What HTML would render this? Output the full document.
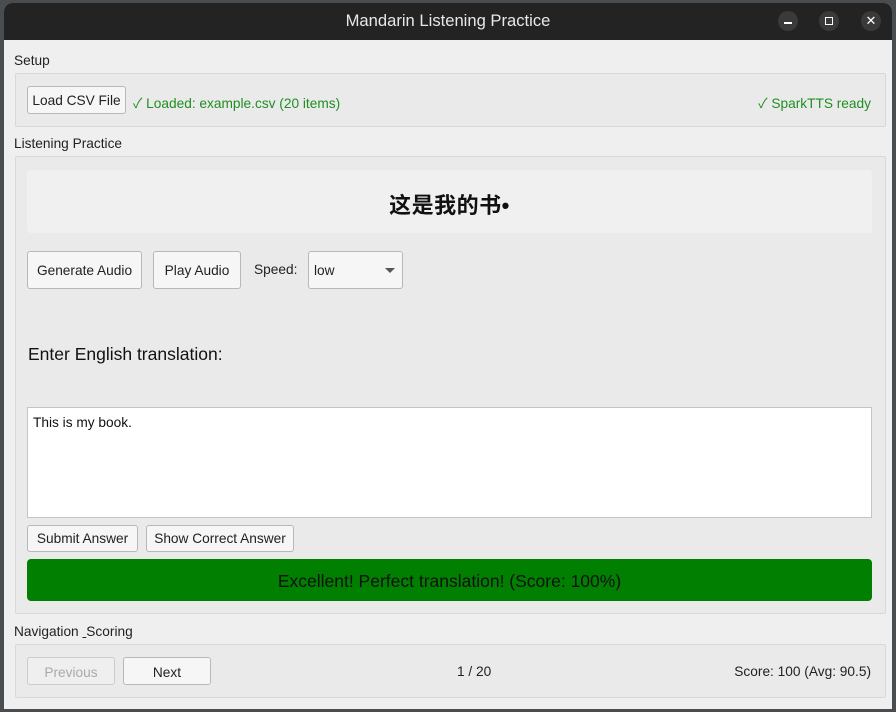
<!DOCTYPE html>
<html><head><meta charset="utf-8"><style>
*{box-sizing:border-box;margin:0;padding:0}
body{width:896px;height:712px;background:#4a4d50;font-family:"Liberation Sans","Noto Sans CJK SC",sans-serif;font-size:13.7px;color:#222;position:relative;overflow:hidden}
.abs{position:absolute}
.win{left:4px;top:3px;width:888px;height:706px;background:#efefef;border-radius:8px 8px 0 0;overflow:hidden}
.title{left:0;top:0;width:888px;height:37px;background:#232323;color:#e8e8e8;font-size:16.6px;text-align:center;line-height:36px}
.cb{width:20px;height:20px;border-radius:50%;background:#3a3a3a;top:8px}
.grp{border:1px solid #d8d8d8;background:#eaeaea;border-radius:2px}
.btn{border:1px solid #b8b8b8;background:#f6f6f6;border-radius:3px;text-align:center;color:#222}
.lbl{color:#222}
</style></head><body>
<div class="abs win">
 <div class="abs title">Mandarin Listening Practice</div>
 <div class="abs cb" style="left:774px"><div class="abs" style="left:6px;top:11px;width:8px;height:1.5px;background:#fff"></div></div>
 <div class="abs cb" style="left:815px"><div class="abs" style="left:6px;top:6px;width:8px;height:8px;border:1.5px solid #fff"></div></div>
 <div class="abs cb" style="left:857px;color:#fff;font-size:13px;text-align:center;line-height:20px">✕</div>

 <div class="abs lbl" style="left:10px;top:50px">Setup</div>
 <div class="abs grp" style="left:11px;top:70px;width:871px;height:54px"></div>
 <div class="abs btn" style="left:23px;top:83px;width:99px;height:28px;line-height:27px">Load CSV File</div>
 <div class="abs" style="left:129px;top:89px;color:#1f8f1f">✓ Loaded: example.csv (20 items)</div>
 <div class="abs" style="right:21px;top:89px;color:#1f8f1f">✓ SparkTTS ready</div>

 <div class="abs lbl" style="left:10px;top:133px">Listening Practice</div>
 <div class="abs grp" style="left:11px;top:153px;width:871px;height:458px"></div>
 <div class="abs" style="left:23px;top:167px;width:845px;height:63px;background:#f0f0f0;border-radius:4px"></div>
 <div class="abs" style="left:23px;top:190px;width:845px;text-align:center;font-size:22px;letter-spacing:0.5px;line-height:26px;font-weight:bold;color:#111">这是我的书•</div>
 <div class="abs btn" style="left:23px;top:248px;width:115px;height:38px;line-height:37px">Generate Audio</div>
 <div class="abs btn" style="left:149px;top:248px;width:88px;height:38px;line-height:37px">Play Audio</div>
 <div class="abs lbl" style="left:250px;top:259px">Speed:</div>
 <div class="abs btn" style="left:304px;top:248px;width:95px;height:38px;line-height:37px;text-align:left;padding-left:5px">low<span class="abs" style="left:76px;top:16px;width:0;height:0;border-left:5px solid transparent;border-right:5px solid transparent;border-top:5px solid #555"></span></div>
 <div class="abs" style="left:24px;top:341px;font-size:17.5px;color:#111">Enter English translation:</div>
 <div class="abs" style="left:23px;top:404px;width:845px;height:111px;background:#fff;border:1px solid #c4c4c4;padding:7px 5px;color:#111">This is my book.</div>
 <div class="abs btn" style="left:23px;top:522px;width:111px;height:27px;line-height:26px">Submit Answer</div>
 <div class="abs btn" style="left:142px;top:522px;width:148px;height:27px;line-height:26px">Show Correct Answer</div>
 <div class="abs" style="left:23px;top:556px;width:845px;height:42px;background:#007f00;border-radius:4px;text-align:center;line-height:44px;font-size:17.5px;color:#111">Excellent! Perfect translation! (Score: 100%)</div>

 <div class="abs lbl" style="left:10px;top:621px">Navigation <u>&nbsp;</u>Scoring</div>
 <div class="abs grp" style="left:11px;top:641px;width:871px;height:54px"></div>
 <div class="abs btn" style="left:23px;top:654px;width:88px;height:28px;line-height:29px;color:#aaa;background:#efefef;border-color:#ccc">Previous</div>
 <div class="abs btn" style="left:119px;top:654px;width:88px;height:28px;line-height:29px">Next</div>
 <div class="abs lbl" style="left:453px;top:661px">1 / 20</div>
 <div class="abs lbl" style="right:21px;top:661px">Score: 100 (Avg: 90.5)</div>
</div>
</body></html>
